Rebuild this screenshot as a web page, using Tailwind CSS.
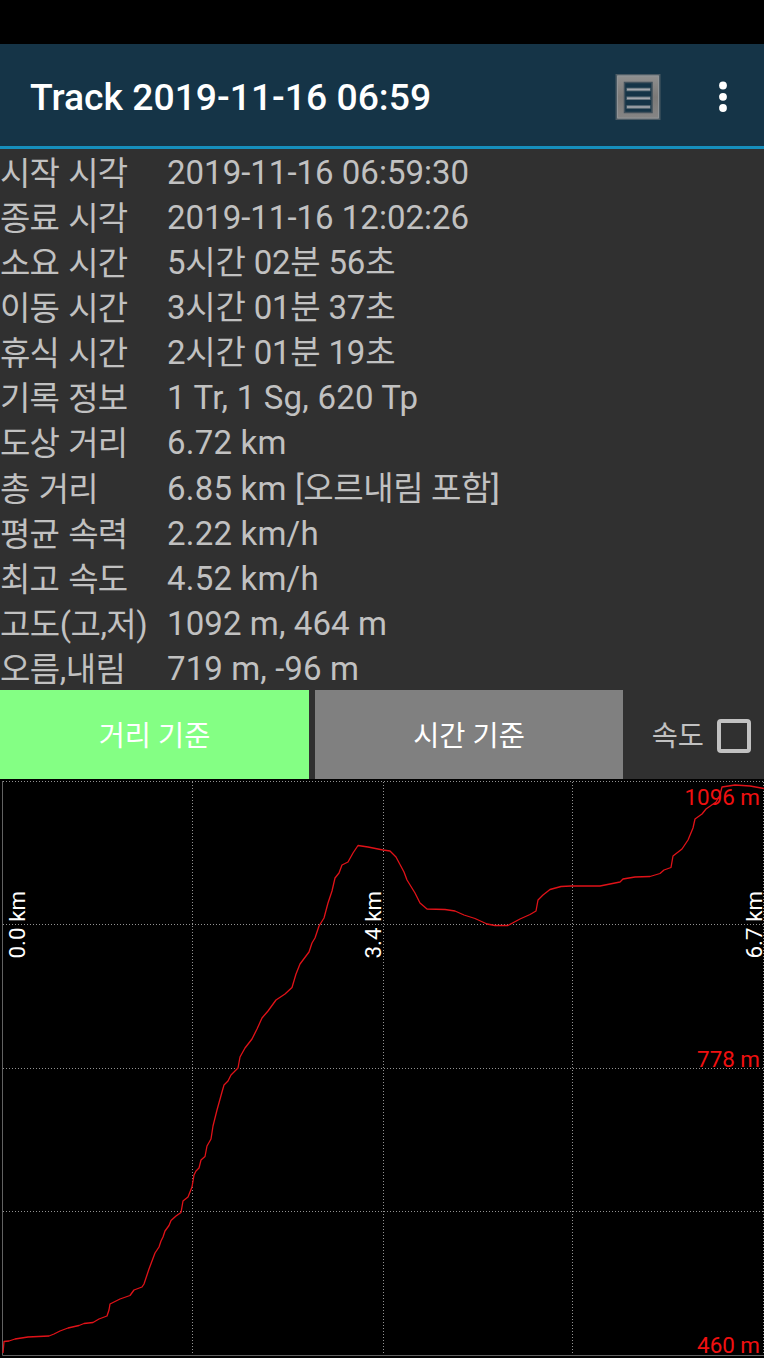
<!DOCTYPE html>
<html lang="ko">
<head>
    <meta charset="UTF-8">
    <meta name="viewport" content="width=device-width, initial-scale=1.0">
    <title>Track 2019-11-16 06:59</title>
    <script src="https://cdn.jsdelivr.net/npm/@tailwindcss/browser@4"></script>
</head>
<body class="bg-black">
    <div class="w-[764px] h-[1358px] flex flex-col overflow-hidden bg-[#303030] text-[#c1c1c1] font-[Roboto,'Noto_Sans_CJK_KR',sans-serif]">
        <!-- Status bar -->
        <div class="h-[44px] shrink-0 bg-black"></div>

        <!-- Title bar -->
        <header class="h-[105px] shrink-0 flex items-center bg-[#153447] border-b-3 border-[#168fbd] pt-[3px] pl-[30px] pr-[37px]">
            <h1 class="flex-1 text-[37.3px] leading-none font-medium text-white whitespace-nowrap pt-[3px]">Track 2019-11-16 06:59</h1>
            <button class="mr-[57px]">
                <svg class="block w-[48px] h-[50px]" viewBox="0 0 48 50">
                    <defs>
                        <linearGradient id="frame" x1="0" y1="0" x2="0" y2="1">
                            <stop offset="0" stop-color="#8f8f8f" />
                            <stop offset="0.5" stop-color="#7b7977" />
                            <stop offset="1" stop-color="#858585" />
                        </linearGradient>
                    </defs>
                    <path fill="none" stroke="#4b5a64" stroke-width="2" d="M2.500 3h43v44h-43z" />
                    <path fill="url(#frame)" fill-rule="evenodd" d="M3 3.500h42v43H3zM10.500 10.500v29.500h27.500v-29.500z" />
                    <path fill="none" stroke="#909497" d="M3.500 46V4h41v42z" />
                    <path fill="none" stroke="#42515c" stroke-width="1.500" d="M10.500 10.500h27.500v30h-27.500z" />
                    <path stroke="#66747e" stroke-width="3.400" d="M12.500 17.500h24M12.500 26.200h24M12.500 35h24" />
                    <path stroke="#a4a7ad" stroke-width="1.600" d="M13 17.500h23M13 26.200h23M13 35h23" />
                </svg>
            </button>
            <button>
                <svg class="block w-[8px] h-[32px]" viewBox="0 0 8 32" fill="white">
                    <circle cx="4" cy="4.500" r="3.900" />
                    <circle cx="4" cy="15.800" r="3.900" />
                    <circle cx="4" cy="27" r="3.900" />
                </svg>
            </button>
        </header>

        <!-- Track info -->
        <dl class="h-[541px] shrink-0 grid grid-cols-[167px_1fr] grid-rows-12 text-[33px] leading-[47px] whitespace-nowrap">
            <dt class="pt-px tracking-[-0.9px] [word-spacing:2px]">시작 시각</dt><dd>2019-11-16 06:59:30</dd>
            <dt class="pt-px tracking-[-0.9px] [word-spacing:2px]">종료 시각</dt><dd>2019-11-16 12:02:26</dd>
            <dt class="pt-px tracking-[-0.9px] [word-spacing:2px]">소요 시간</dt><dd class="tracking-[-0.2px]">5시간 02분 56초</dd>
            <dt class="pt-px tracking-[-0.9px] [word-spacing:2px]">이동 시간</dt><dd class="tracking-[-0.2px]">3시간 01분 37초</dd>
            <dt class="pt-px tracking-[-0.9px] [word-spacing:2px]">휴식 시간</dt><dd class="tracking-[-0.2px]">2시간 01분 19초</dd>
            <dt class="pt-px tracking-[-0.9px] [word-spacing:2px]">기록 정보</dt><dd class="tracking-[0.2px]">1 Tr, 1 Sg, 620 Tp</dd>
            <dt class="pt-px tracking-[-0.9px] [word-spacing:2px]">도상 거리</dt><dd class="tracking-[0.2px]">6.72 km</dd>
            <dt class="pt-px tracking-[-0.9px] [word-spacing:2px]">총 거리</dt><dd><span class="tracking-[0.2px]">6.85 km </span><span class="tracking-[-0.4px]">[오르내림 포함]</span></dd>
            <dt class="pt-px tracking-[-0.9px] [word-spacing:2px]">평균 속력</dt><dd class="tracking-[0.2px]">2.22 km/h</dd>
            <dt class="pt-px tracking-[-0.9px] [word-spacing:2px]">최고 속도</dt><dd class="tracking-[0.2px]">4.52 km/h</dd>
            <dt class="pt-px tracking-[-0.5px]">고도(고,저)</dt><dd class="tracking-[0.1px]">1092 m, 464 m</dd>
            <dt class="pt-px tracking-[-0.5px]">오름,내림</dt><dd class="tracking-[0.1px]">719 m, -96 m</dd>
        </dl>

        <!-- Graph mode -->
        <div class="h-[89px] shrink-0 flex items-stretch text-[28.4px]">
            <button class="w-[309px] mr-[6px] pt-[6px] bg-[#84ff84] text-white">거리 기준</button>
            <button class="w-[308px] pt-[6px] bg-[#808080] text-white">시간 기준</button>
            <label class="flex-1 flex items-center justify-end gap-[13px] pt-[2px] pr-[13px]">
                <span class="pt-1">속도</span>
                <span class="size-[34px] border-4 border-[#c1c1c1] rounded-[4px]"></span>
            </label>
        </div>

        <!-- Altitude graph -->
        <svg class="block w-[764px] h-[579px] shrink-0 bg-black" viewBox="0 779 764 579">
            <g stroke="#929292" stroke-dasharray="1 2" shape-rendering="crispEdges">
                <path d="M3 781.500H764M3 924.500H764M3 1068.500H764M3 1211.500H764" />
                <path d="M192.500 782V1355M383.500 782V1355M572.500 782V1355M763.500 782V1355" />
            </g>
            <path fill="none" stroke="#626262" d="M2.500 781V1355.500H764" />
            <g fill="white" font-size="22.400">
                <text transform="translate(25 958.500) rotate(-90)">0.0 km</text>
                <text transform="translate(381.400 958.500) rotate(-90)">3.4 km</text>
                <text transform="translate(761.500 958.500) rotate(-90)">6.7 km</text>
            </g>
            <g fill="#f01010" font-size="22.400" text-anchor="end">
                <text x="760" y="805">1096 m</text>
                <text x="760" y="1067">778 m</text>
                <text x="760" y="1353">460 m</text>
            </g>
            <polyline fill="none" stroke="#e01218" stroke-width="1.300" stroke-linejoin="round" points="
                3,1353 4,1341.500 9,1341 15,1339 28,1337 49,1336 54,1334 60,1331 68,1328 79,1325.500
                84,1323.500 93,1322.500 99,1319 107,1316 109,1310 110,1304 120,1299 130,1295.500 134,1290 142,1287
                144,1284 149,1269 155,1253 159,1247 161,1241 163,1237 165,1231 169,1225.500 171,1220.500 176,1216
                181,1212.500 183,1201 188,1197 192,1187 194,1175 196,1171 199,1168 201,1160 205,1156.500 207,1146
                211,1139 213,1126 217,1110 222,1092 224,1085 228,1081 231,1075 238,1068 240,1057 245,1048
                252,1039 257,1029 262,1018 268,1011 276,1000 285,994 292,987.500 296,974 300,964 309,952
                312,943 315,938 319,926 324,918 328,903 332,891 335,878 339,873 342,865 348,862
                353,853 358,845.500 368,847 383,850 390,851 396,857 404,872 407,880 415,893 420,903
                427,909 445,909.500 455,911 464,915 475,918.500 487,924 495,925.500 508,925.500 520,919 530,914.500
                536,911 538,900 543,895 550,889.500 561,886.500 571,886 600,886 610,884 620,882 623,879
                635,877 650,876.500 660,873.500 664,870 671,867.500 673,856 682,849 688,840 693,828 695,819
                702,814 706,809 716,802 720,795 722,787 735,785 750,786 764,788.500" />
        </svg>
    </div>
</body>
</html>
